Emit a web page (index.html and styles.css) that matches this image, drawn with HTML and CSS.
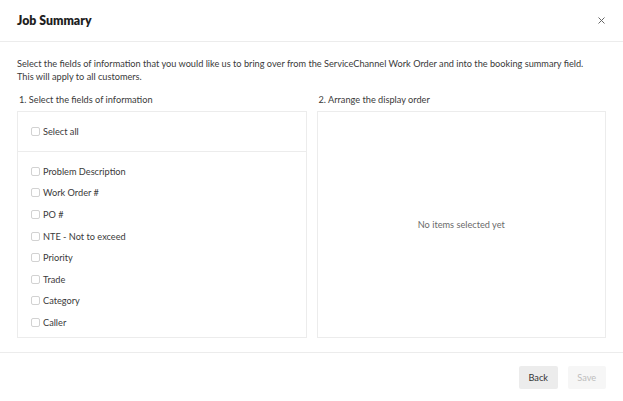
FILE: index.html
```html
<!DOCTYPE html>
<html>
<head>
<meta charset="utf-8">
<link rel="stylesheet" href="styles.css">
</head>
<body>
<div class="modal">
  <header class="head">
    <h1 class="title">Job Summary</h1>
    <button class="close" aria-label="Close">
      <svg width="7" height="7" viewBox="0 0 7 7"><path d="M0.5 0.5L6.5 6.5M6.5 0.5L0.5 6.5" stroke="#666" stroke-width="1" fill="none"/></svg>
    </button>
  </header>
  <main class="content">
    <p class="desc">Select the fields of information that you would like us to bring over from the ServiceChannel Work Order and into the booking summary field.<br>This will apply to all customers.</p>
    <div class="cols">
      <section class="col">
        <div class="label">1. Select the fields of information</div>
        <div class="box">
          <div class="all"><label class="item"><span class="cb"></span>Select all</label></div>
          <div class="list">
            <label class="item"><span class="cb"></span>Problem Description</label>
            <label class="item"><span class="cb"></span>Work Order #</label>
            <label class="item"><span class="cb"></span>PO #</label>
            <label class="item"><span class="cb"></span>NTE - Not to exceed</label>
            <label class="item"><span class="cb"></span>Priority</label>
            <label class="item"><span class="cb"></span>Trade</label>
            <label class="item"><span class="cb"></span>Category</label>
            <label class="item"><span class="cb"></span>Caller</label>
          </div>
        </div>
      </section>
      <section class="col">
        <div class="label">2. Arrange the display order</div>
        <div class="box empty">No items selected yet</div>
      </section>
    </div>
  </main>
  <footer class="foot">
    <button class="btn back">Back</button>
    <button class="btn save" disabled>Save</button>
  </footer>
</div>
</body>
</html>
```
FILE: styles.css
```css
* { box-sizing: border-box; }
html, body { margin: 0; padding: 0; background: #fff; }
body { font-family: Lato, "Noto Sans", sans-serif; color: #3a3a3a; font-size: 9.2px; }
.modal { width: 623px; height: 401px; display: flex; flex-direction: column; }
.head { height: 42px; border-bottom: 1px solid #ececec; display: flex; align-items: center; justify-content: space-between; padding: 0 18px 1px 17px; }
.title { margin: 0; font-size: 12.3px; font-weight: 800; color: #1f1f1f; letter-spacing: 0; }
.close { border: 0; background: none; padding: 0; width: 7px; height: 7px; display: flex; }
.content { padding: 15px 17px 0 17px; flex: 1; }
.desc { margin: 0; line-height: 13px; color: #3a3a3a; }
.cols { margin-top: 10px; display: grid; grid-template-columns: 1fr 1fr; gap: 10px; }
.label { line-height: 13px; padding-left: 2px; margin-bottom: 4.5px; color: #3a3a3a; }
.box { border: 1px solid #ececec; height: 227px; }
.all { height: 40px; border-bottom: 1px solid #ececec; display: flex; align-items: center; padding-left: 13px; }
.list { padding: 9px 0 0 13px; }
.item { display: flex; align-items: center; height: 21.6px; gap: 3px; color: #3a3a3a; }
.cb { width: 9px; height: 9px; border: 1px solid #d2d2d2; border-radius: 2px; background: #fff; flex: none; }
.empty { display: flex; align-items: center; justify-content: center; color: #6a6a6a; }
.foot { height: 49px; border-top: 1px solid #ececec; display: flex; justify-content: flex-end; align-items: flex-start; gap: 10px; padding: 13px 17px 0 0; }
.btn { font-family: inherit; font-size: 9.2px; border: 0; border-radius: 2px; height: 23px; width: 38.5px; padding: 0; }
.back { background: #ececec; color: #333; }
.save { background: #f6f6f6; color: #bdbdbd; }
```
